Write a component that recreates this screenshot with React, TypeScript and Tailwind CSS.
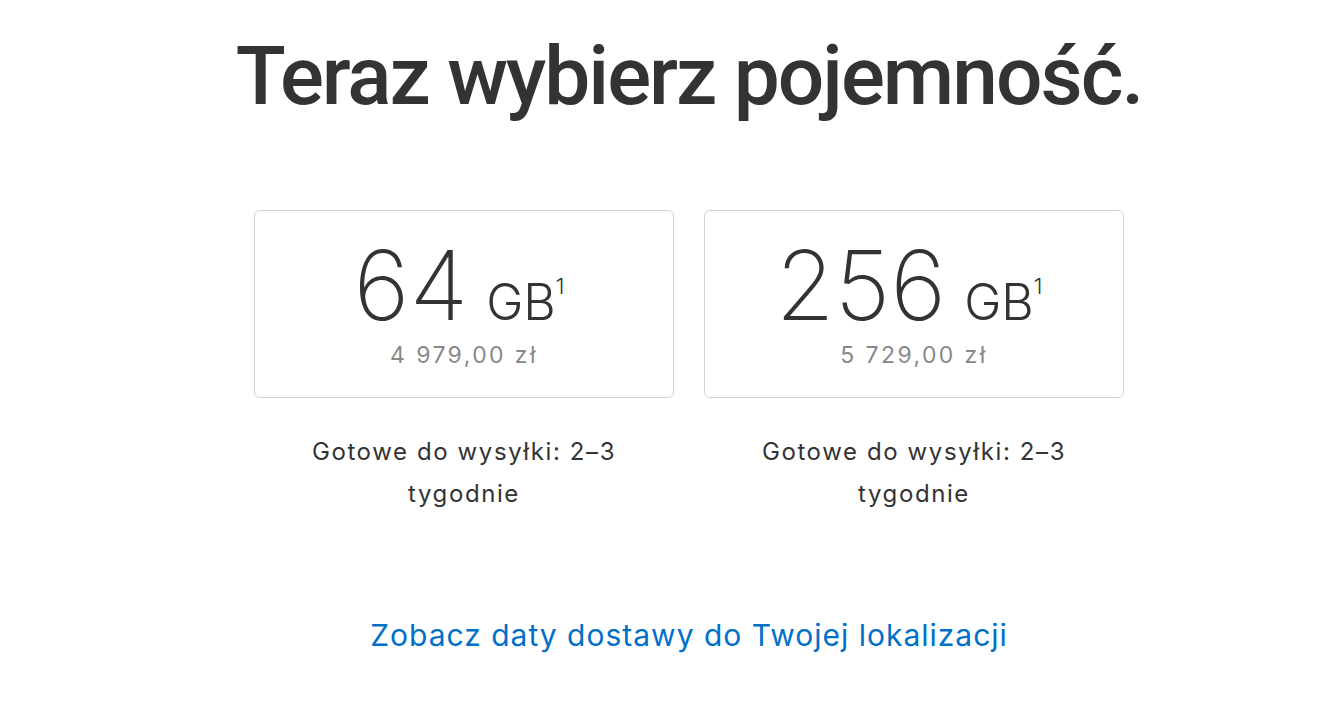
export default function App() {
  const options = [
    { size: "64", price: "4 979,00 zł" },
    { size: "256", price: "5 729,00 zł" },
  ]

  return (
    <div className="w-full h-[718px] bg-white flex flex-col items-center pl-[49px] font-['Inter','Liberation_Sans',sans-serif] text-[#333336]">
      {/* Heading */}
      <h1 className="mt-[28px] text-[82px] leading-[96px] font-medium tracking-[-2px] font-['Roboto','Liberation_Sans',sans-serif] text-[#333333]">
        Teraz wybierz pojemność.
      </h1>

      {/* Capacity options */}
      <div className="mt-[86px] flex gap-[30px]">
        {options.map((opt) => (
          <div key={opt.size} className="w-[420px] flex flex-col items-center">
            <button className="w-full h-[188px] border border-[#d2d2d2] rounded-[6px] flex flex-col items-center pt-[24px] bg-white">
              <div className="flex items-baseline pr-[10px] text-[#333333]">
                <span className="text-[96px] leading-[100px] font-extralight">{opt.size}</span>
                <span className="ml-[18px] text-[50px] leading-none font-light">GB</span>
                <sup className="text-[22px] font-light relative -top-[26px]">1</sup>
              </div>
              <div className="mt-[6px] text-[23px] leading-[28px] text-[#888888] tracking-[2.4px]">{opt.price}</div>
            </button>
            <p className="mt-[33px] w-[340px] text-center text-[24px] leading-[42px] tracking-[1.6px] text-[#333333]">
              Gotowe do wysyłki: 2–3 tygodnie
            </p>
          </div>
        ))}
      </div>

      {/* Delivery link */}
      <a href="#" className="mt-[100px] text-[30px] leading-[40px] tracking-[1px] text-[#0070c9]">
        Zobacz daty dostawy do Twojej lokalizacji
      </a>
    </div>
  )
}
